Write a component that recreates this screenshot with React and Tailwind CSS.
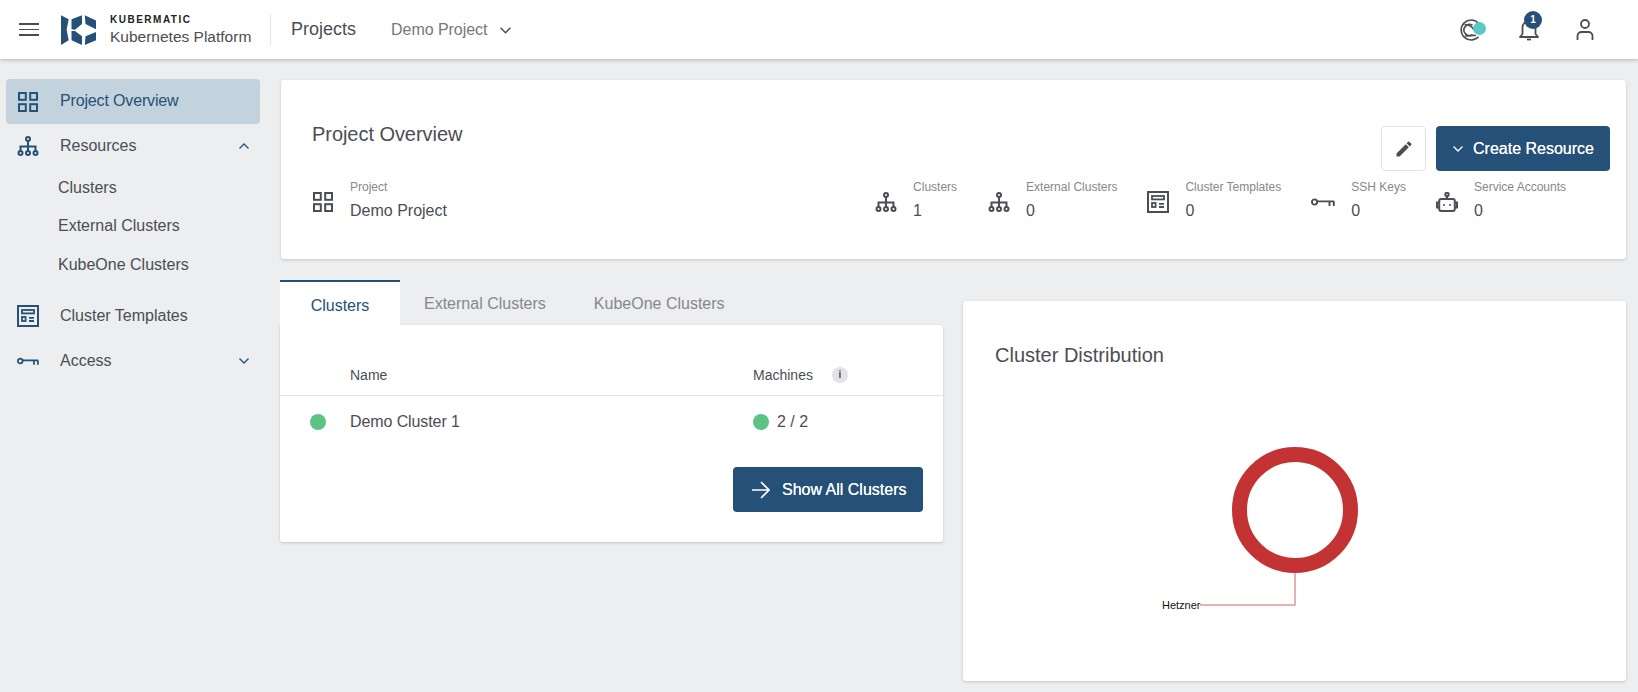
import React from "react";

const GridIcon = ({ className }) => (
  <svg viewBox="0 0 20 20" className={className} fill="none" stroke="currentColor" strokeWidth="2">
    <rect x="1" y="1" width="6.8" height="6.8" />
    <rect x="12.2" y="1" width="6.8" height="6.8" />
    <rect x="1" y="12.2" width="6.8" height="6.8" />
    <rect x="12.2" y="12.2" width="6.8" height="6.8" />
  </svg>
);

const TreeIcon = ({ className }) => (
  <svg viewBox="0 0 22 20" className={className} fill="none" stroke="currentColor" strokeWidth="2">
    <circle cx="11" cy="3" r="2" />
    <path d="M11 5v5M3.500 15v-4.500h15V15M11 10v5" />
    <circle cx="3.500" cy="17" r="2" />
    <circle cx="11" cy="17" r="2" />
    <circle cx="18.500" cy="17" r="2" />
  </svg>
);

const TemplateIcon = ({ className }) => (
  <svg viewBox="0 0 22 22" className={className} fill="none" stroke="currentColor">
    <rect x="1" y="1" width="20" height="20" strokeWidth="2" />
    <rect x="5" y="5" width="12" height="3.400" strokeWidth="1.800" />
    <rect x="5" y="12" width="3.600" height="4" strokeWidth="1.800" />
    <path d="M12 12.800h5M12 16h5" strokeWidth="1.800" />
  </svg>
);

const KeyIcon = ({ className }) => (
  <svg viewBox="0 0 24 9" className={className} fill="none" stroke="currentColor" strokeWidth="1.900">
    <circle cx="3.500" cy="4" r="2.600" />
    <path d="M6.200 3.400h17M18.500 3.400V8M22.800 3.400V8" />
  </svg>
);

const RobotIcon = ({ className }) => (
  <svg viewBox="0 0 22 20" className={className} fill="none" stroke="currentColor" strokeWidth="2">
    <circle cx="11" cy="2.400" r="1.700" />
    <path d="M11 4v3" />
    <rect x="3.200" y="7" width="15.600" height="12" rx="2" />
    <path d="M3 10.500H1v5h2M19 10.500h2v5h-2" />
    <circle cx="8" cy="13" r="1" fill="currentColor" stroke="none" />
    <circle cx="14" cy="13" r="1" fill="currentColor" stroke="none" />
  </svg>
);

const Chevron = ({ up, className }) => (
  <svg viewBox="0 0 10 6" className={className} fill="none" stroke="currentColor" strokeWidth="1.300">
    <path d={up ? "M.5 5.500 5 1l4.500 4.500" : "M.5.500 5 5 9.500.500"} />
  </svg>
);

function Logo() {
  return (
    <svg viewBox="0 0 100 85" className="w-[35px] h-[30px]" fill="#255078">
      <polygon points="0,0 22,12 16,42 22,72 0,85" />
      <polygon points="30,12 60,0 60,25 40,42 30,40" />
      <polygon points="68,0 100,15 100,40 70,25" />
      <polygon points="30,45 40,45 60,60 60,85 30,72" />
      <polygon points="70,60 100,48 100,72 68,85" />
    </svg>
  );
}

function Header() {
  return (
    <header className="relative z-10 h-[59px] bg-white flex items-center shadow-[0_1px_4px_rgba(0,0,0,0.25)] text-[#4a4e54]">
      <div className="ml-[19px] w-5 flex flex-col gap-[3.5px]">
        <div className="h-[1.7px] bg-[#4a4e54]" />
        <div className="h-[1.7px] bg-[#4a4e54]" />
        <div className="h-[1.7px] bg-[#4a4e54]" />
      </div>
      <div className="ml-[22px]">
        <Logo />
      </div>
      <div className="ml-[14px] w-[145px] flex flex-col whitespace-nowrap">
        <span className="text-[10px] leading-[11px] font-bold tracking-[1.5px] text-[#222]">KUBERMATIC</span>
        <span className="text-[15.5px] leading-[19px] mt-[2px] text-[#4a4e54]">Kubernetes Platform</span>
      </div>
      <div className="ml-[15px] w-px h-[30px] bg-[#e3e4e6]" />
      <span className="ml-[20px] text-[18px]">Projects</span>
      <span className="ml-[35px] text-[16px] text-[#75787d] tracking-[-0.05px]">Demo Project</span>
      <Chevron className="ml-[13px] mt-[1px] w-[11px] h-[7px] text-[#4a4e54]" />
      <div className="ml-auto flex items-center mr-[44px]">
        <div className="relative w-[22px] h-[22px]">
          <svg viewBox="0 0 22 22" className="w-[22px] h-[22px]" fill="none" stroke="#4a4e54" strokeWidth="1.600">
            <path d="M18.500 4.200A10 10 0 1 0 18.500 17.800" />
            <path d="M12.500 6.200A5.600 5.600 0 1 0 12.500 15.800" />
            <path d="M4.500 5.500c5 .5 8 2.500 9.500 5.500M5 17c3.500-.5 7-.8 11-.5" />
          </svg>
          <div className="absolute left-[13px] top-[3px] w-[13px] h-[13px] rounded-full bg-[#5bc8c8]" />
        </div>
        <div className="relative ml-[37px] w-[20px] h-[22px]">
          <svg viewBox="0 0 20 22" className="w-[20px] h-[22px]" fill="none" stroke="#4a4e54" strokeWidth="1.800">
            <path d="M1 18h18l-2.500-3V8.500a6.500 6.500 0 0 0-13 0V15z" strokeLinejoin="round" />
            <path d="M8 20.500h4" />
          </svg>
          <div className="absolute left-[5px] top-[-8px] w-[18px] h-[18px] rounded-full bg-[#255078] text-white text-[10px] font-bold flex items-center justify-center">
            1
          </div>
        </div>
        <svg viewBox="0 0 18 22" className="ml-[37px] w-[18px] h-[22px]" fill="none" stroke="#4a4e54" strokeWidth="1.800">
          <circle cx="9" cy="5" r="4" />
          <path d="M1.500 21v-4a4 4 0 0 1 4-4h7a4 4 0 0 1 4 4v4" />
        </svg>
      </div>
    </header>
  );
}

function SideItem({ icon, label, chevron }) {
  return (
    <div className="h-[44px] flex items-center pl-[11px] pr-[11px] text-[#4a4e54]">
      <div className="w-[22px] flex justify-center text-[#255078]">{icon}</div>
      <span className="ml-[21px] text-[16px]">{label}</span>
      {chevron && <Chevron up={chevron === "up"} className="ml-auto w-[10px] h-[6px] text-[#255078]" />}
    </div>
  );
}

function Sidebar() {
  return (
    <aside className="w-[281px] shrink-0 pl-[6px] pr-[21px] pt-[20px]">
      <div className="h-[45px] flex items-center pl-[12px] bg-[#c3d3dd] rounded text-[#255078]">
        <GridIcon className="w-5 h-5" />
        <span className="ml-[22px] mb-[2px] text-[16px] tracking-[-0.15px]">Project Overview</span>
      </div>
      <SideItem icon={<TreeIcon className="w-[22px] h-5" />} label="Resources" chevron="up" />
      <div className="pl-[52px] pt-px text-[16px] text-[#4a4e54]">
        <div className="h-[38px] flex items-center">Clusters</div>
        <div className="h-[38px] flex items-center">External Clusters</div>
        <div className="h-[39px] flex items-center">KubeOne Clusters</div>
      </div>
      <div className="mt-[10px]">
        <SideItem icon={<TemplateIcon className="w-[22px] h-[22px]" />} label="Cluster Templates" />
      </div>
      <div className="mt-px">
        <SideItem icon={<KeyIcon className="w-[24px] h-[9px]" />} label="Access" chevron="down" />
      </div>
    </aside>
  );
}

function Stat({ icon, label, value, iconClass }) {
  return (
    <div className="flex items-center">
      <div className={`mt-[3px] flex justify-center text-[#4a4e54] ${iconClass}`}>{icon}</div>
      <div>
        <div className="text-[12px] leading-[14px] text-[#85888d]">{label}</div>
        <div className="mt-[7px] text-[16px] leading-[20px] text-[#4a4e54]">{value}</div>
      </div>
    </div>
  );
}

function OverviewCard() {
  return (
    <section className="h-[179px] bg-white rounded-[3px] shadow-[0_1px_3px_rgba(0,0,0,0.18)] pt-[42px] pl-[31px]">
      <div className="flex items-start justify-between pr-[16px]">
        <h1 className="text-[20px] leading-[24px] text-[#4a4e54] tracking-[-0.05px]">Project Overview</h1>
        <div className="flex gap-[10px] mt-[4px]">
          <button className="w-[45px] h-[45px] border border-[#e2e3e5] rounded flex items-center justify-center text-[#4a4e54]">
            <svg viewBox="0 0 24 24" className="w-[20px] h-[20px]" fill="currentColor">
              <path d="M3 17.250V21h3.750L17.810 9.940l-3.750-3.750L3 17.250zM20.710 7.040a1 1 0 0 0 0-1.410l-2.340-2.340a1 1 0 0 0-1.410 0l-1.830 1.830 3.750 3.750 1.830-1.830z" />
            </svg>
          </button>
          <button className="w-[174px] h-[45px] bg-[#255078] rounded text-white text-[16px] flex items-center pl-[17px]">
            <Chevron className="w-[10px] h-[6px]" />
            <span className="ml-[10px] [text-shadow:0_0_0.4px_white]">Create Resource</span>
          </button>
        </div>
      </div>
      <div className="flex justify-between pr-[60px] mt-[9px]">
        <Stat icon={<GridIcon className="w-5 h-5" />} label="Project" value="Demo Project" iconClass="w-[22px] mr-[16px]" />
        <div className="flex gap-[30px]">
          <div className="mr-px">
            <Stat icon={<TreeIcon className="w-[22px] h-5" />} label="Clusters" value="1" iconClass="w-[22px] mr-[16px]" />
          </div>
          <Stat icon={<TreeIcon className="w-[22px] h-5" />} label="External Clusters" value="0" iconClass="w-[22px] mr-[16px]" />
          <Stat icon={<TemplateIcon className="w-[22px] h-[22px]" />} label="Cluster Templates" value="0" iconClass="w-[22px] mr-[16px]" />
          <Stat icon={<KeyIcon className="w-[24px] h-[9px]" />} label="SSH Keys" value="0" iconClass="w-[24px] mr-[16px]" />
          <Stat icon={<RobotIcon className="w-[22px] h-5" />} label="Service Accounts" value="0" iconClass="w-[22px] mr-[16px]" />
        </div>
      </div>
    </section>
  );
}

function ClustersPanel() {
  return (
    <div className="w-[664px] -ml-px">
      <div className="flex h-[45px]">
        <div className="w-[120px] bg-white border-t-2 border-[#255078] flex items-center justify-center text-[16px] text-[#255078] pt-[4px]">
          Clusters
        </div>
        <div className="px-6 flex items-center text-[16px] text-[#85888d] pt-[3px]">External Clusters</div>
        <div className="px-6 flex items-center text-[16px] text-[#85888d] pt-[3px]">KubeOne Clusters</div>
      </div>
      <div className="h-[217px] bg-white rounded-b-[3px] rounded-tr-[3px] shadow-[0_1px_3px_rgba(0,0,0,0.18)]">
        <div className="h-[71px] pl-[70px] pt-[40px] flex items-start border-b border-[#e2e3e5] text-[14px] leading-[20px] text-[#4a4e54]">
          <div className="w-[403px]">Name</div>
          <div>Machines</div>
          <div className="ml-[19px] mt-[2px] w-4 h-4 rounded-full bg-[#e2e3e5] text-[#4a4e54] text-[10px] leading-[16px] font-bold text-center">
            i
          </div>
        </div>
        <div className="h-[52px] pl-[30px] flex items-center text-[16px] text-[#4a4e54]">
          <div className="w-4 h-4 rounded-full bg-[#5cc285]" />
          <div className="ml-[24px] w-[403px] tracking-[-0.1px]">Demo Cluster 1</div>
          <div className="w-4 h-4 rounded-full bg-[#5cc285]" />
          <div className="ml-2">2 / 2</div>
        </div>
        <div className="mt-[19px] flex justify-end pr-[20px]">
          <button className="w-[190px] h-[45px] bg-[#255078] rounded text-white text-[16px] flex items-center pl-[19px]">
            <svg viewBox="0 0 18 18" className="w-[18px] h-[18px]" fill="none" stroke="currentColor" strokeWidth="1.600">
              <path d="M0 9h17M9 1l8 8-8 8" />
            </svg>
            <span className="ml-[12px] [text-shadow:0_0_0.4px_white]">Show All Clusters</span>
          </button>
        </div>
      </div>
    </div>
  );
}

function DistributionCard() {
  return (
    <section className="w-[663px] h-[380px] mt-[21px] bg-white rounded-[3px] shadow-[0_1px_3px_rgba(0,0,0,0.18)] pt-[42px]">
      <h2 className="pl-[32px] text-[20px] leading-[24px] text-[#4a4e54]">Cluster Distribution</h2>
      <svg viewBox="0 0 663 314" className="w-[663px] h-[314px]" fill="none">
        <circle cx="332" cy="143" r="55.500" stroke="#c33333" strokeWidth="15" />
        <path d="M332 206v32h-95" stroke="#dd9a9a" strokeWidth="1.500" />
        <text x="199" y="242" fill="#111" fontSize="11" fontFamily="'Liberation Sans', sans-serif">Hetzner</text>
      </svg>
    </section>
  );
}

export default function App() {
  return (
    <div className="h-[692px] overflow-hidden bg-[#eceef0] font-['Liberation_Sans',Arial,sans-serif]">
      <Header />
      <div className="flex">
        <Sidebar />
        <main className="w-[1345px] pt-[21px]">
          <OverviewCard />
          <div className="mt-[21px] flex gap-[20px]">
            <ClustersPanel />
            <DistributionCard />
          </div>
        </main>
      </div>
    </div>
  );
}
